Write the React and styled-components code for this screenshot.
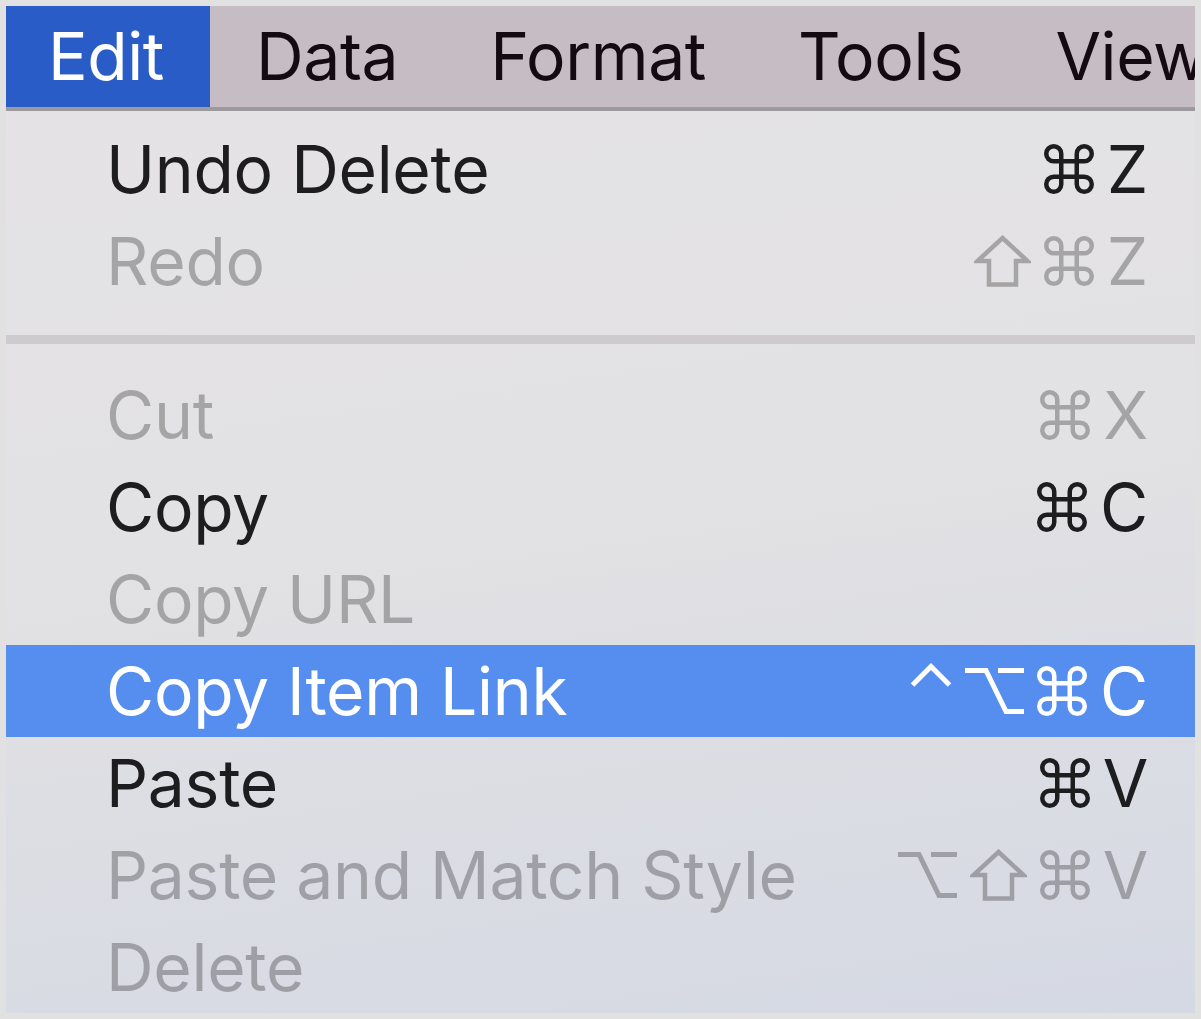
import React from 'react'
import styled, { createGlobalStyle } from 'styled-components';

const GlobalStyle = createGlobalStyle`
    body {
        margin: 0;
        background: #e1e1e1;
        font-family: Inter, 'Noto Sans', sans-serif;
    }
`;

const Frame = styled.div`
    padding: 6px;
`;

const Window = styled.div`
    width: 1189px;
    height: 1007px;
    display: flex;
    flex-direction: column;
    overflow: hidden;
    background: linear-gradient(172deg, #e5e3e5 0%, #e2e1e3 50%, #d5d9e4 100%);
`;

const MenuBar = styled.div`
    height: 101px;
    display: flex;
    background: #c6bcc3;
    border-bottom: 4px solid #9c9a9c;
    white-space: nowrap;
    flex-shrink: 0;
`;

const MenuTitle = styled.div`
    padding: 0 46px 0 ${props => props.active ? 42 : 46}px;
    line-height: 101px;
    font-size: 66px;
    letter-spacing: -0.4px;
    color: ${props => props.active ? '#ffffff' : '#140b12'};
    background: ${props => props.active ? '#2a5cc7' : 'transparent'};
`;

const MenuBody = styled.div`
    padding-top: 12px;
    display: flex;
    flex-direction: column;
`;

const Item = styled.div`
    height: 92px;
    display: flex;
    align-items: center;
    justify-content: space-between;
    padding: 0 47px 0 100px;
    font-size: 66px;
    letter-spacing: -0.3px;
    line-height: 92px;
    background: ${props => props.highlighted ? '#568ef0' : 'transparent'};
    color: ${props => props.highlighted ? '#ffffff' : props.disabled ? 'rgba(0, 0, 0, 0.27)' : '#1d1d1f'};
`;

const Label = styled.span`
    white-space: nowrap;
`;

const Shortcut = styled.div`
    display: flex;
    align-items: center;
    gap: 13px;
    height: 92px;
`;

const Key = styled.span`
    display: block;
`;

const Symbol = styled.svg`
    display: block;
    flex-shrink: 0;
    align-self: ${props => props.top ? 'flex-start' : 'center'};
    margin-top: ${props => props.top ? 18 : 0}px;
`;

const Separator = styled.div`
    height: 9px;
    margin: 28px 0 25px;
    background: #cdcbcd;
`;

const Cmd = () => (
    <Symbol width="50" height="50" viewBox="0 0 50 50" fill="none" stroke="currentColor" strokeWidth="4.5">
        <path d="M17.25 17.25 V9.75 A7.5 7.5 0 1 0 9.75 17.25 H40.25 A7.5 7.5 0 1 0 32.75 9.75 V40.25 A7.5 7.5 0 1 0 40.25 32.75 H9.75 A7.5 7.5 0 1 0 17.25 40.25 Z" />
    </Symbol>
);

const Shift = () => (
    <Symbol width="57" height="52" viewBox="0 0 57 52" fill="none" stroke="currentColor" strokeWidth="4.5" strokeLinejoin="miter">
        <path d="M28.5 3 L53.5 26 H42 V49.5 H15 V26 H3.5 Z" />
    </Symbol>
);

const Option = () => (
    <Symbol width="59" height="48" viewBox="0 0 59 48" fill="none" stroke="currentColor" strokeWidth="5">
        <path d="M0 3.5 H21 L41 44.5 H59 M33 3.5 H59" />
    </Symbol>
);

const Ctrl = () => (
    <Symbol top width="42" height="24" viewBox="0 0 42 24" fill="none" stroke="currentColor" strokeWidth="5">
        <path d="M2.5 22 L21 3.5 L39.5 22" />
    </Symbol>
);

const symbols = { cmd: Cmd, shift: Shift, opt: Option, ctrl: Ctrl };

const menuTitles = ['Edit', 'Data', 'Format', 'Tools', 'View'];

const groups = [
    [
        { label: 'Undo Delete', keys: ['cmd', 'Z'] },
        { label: 'Redo', keys: ['shift', 'cmd', 'Z'], disabled: true },
    ],
    [
        { label: 'Cut', keys: ['cmd', 'X'], disabled: true },
        { label: 'Copy', keys: ['cmd', 'C'] },
        { label: 'Copy URL', keys: [], disabled: true },
        { label: 'Copy Item Link', keys: ['ctrl', 'opt', 'cmd', 'C'], highlighted: true },
        { label: 'Paste', keys: ['cmd', 'V'] },
        { label: 'Paste and Match Style', keys: ['opt', 'shift', 'cmd', 'V'], disabled: true },
        { label: 'Delete', keys: [], disabled: true },
    ],
];

function MenuItem({ item }) {
    return (
        <Item disabled={item.disabled} highlighted={item.highlighted}>
            <Label>{item.label}</Label>
            <Shortcut>
                {item.keys.map((k, i) => {
                    const Icon = symbols[k];
                    return Icon ? <Icon key={i} /> : <Key key={i}>{k}</Key>;
                })}
            </Shortcut>
        </Item>
    )
}

export default function App() {
    return (
        <Frame>
            <GlobalStyle />
            <Window>
                <MenuBar>
                    {menuTitles.map((t, i) => (
                        <MenuTitle key={t} active={i === 0}>{t}</MenuTitle>
                    ))}
                </MenuBar>
                <MenuBody>
                    {groups.map((group, gi) => (
                        <React.Fragment key={gi}>
                            {gi > 0 ? <Separator /> : null}
                            {group.map(item => <MenuItem key={item.label} item={item} />)}
                        </React.Fragment>
                    ))}
                </MenuBody>
            </Window>
        </Frame>
    )
}
